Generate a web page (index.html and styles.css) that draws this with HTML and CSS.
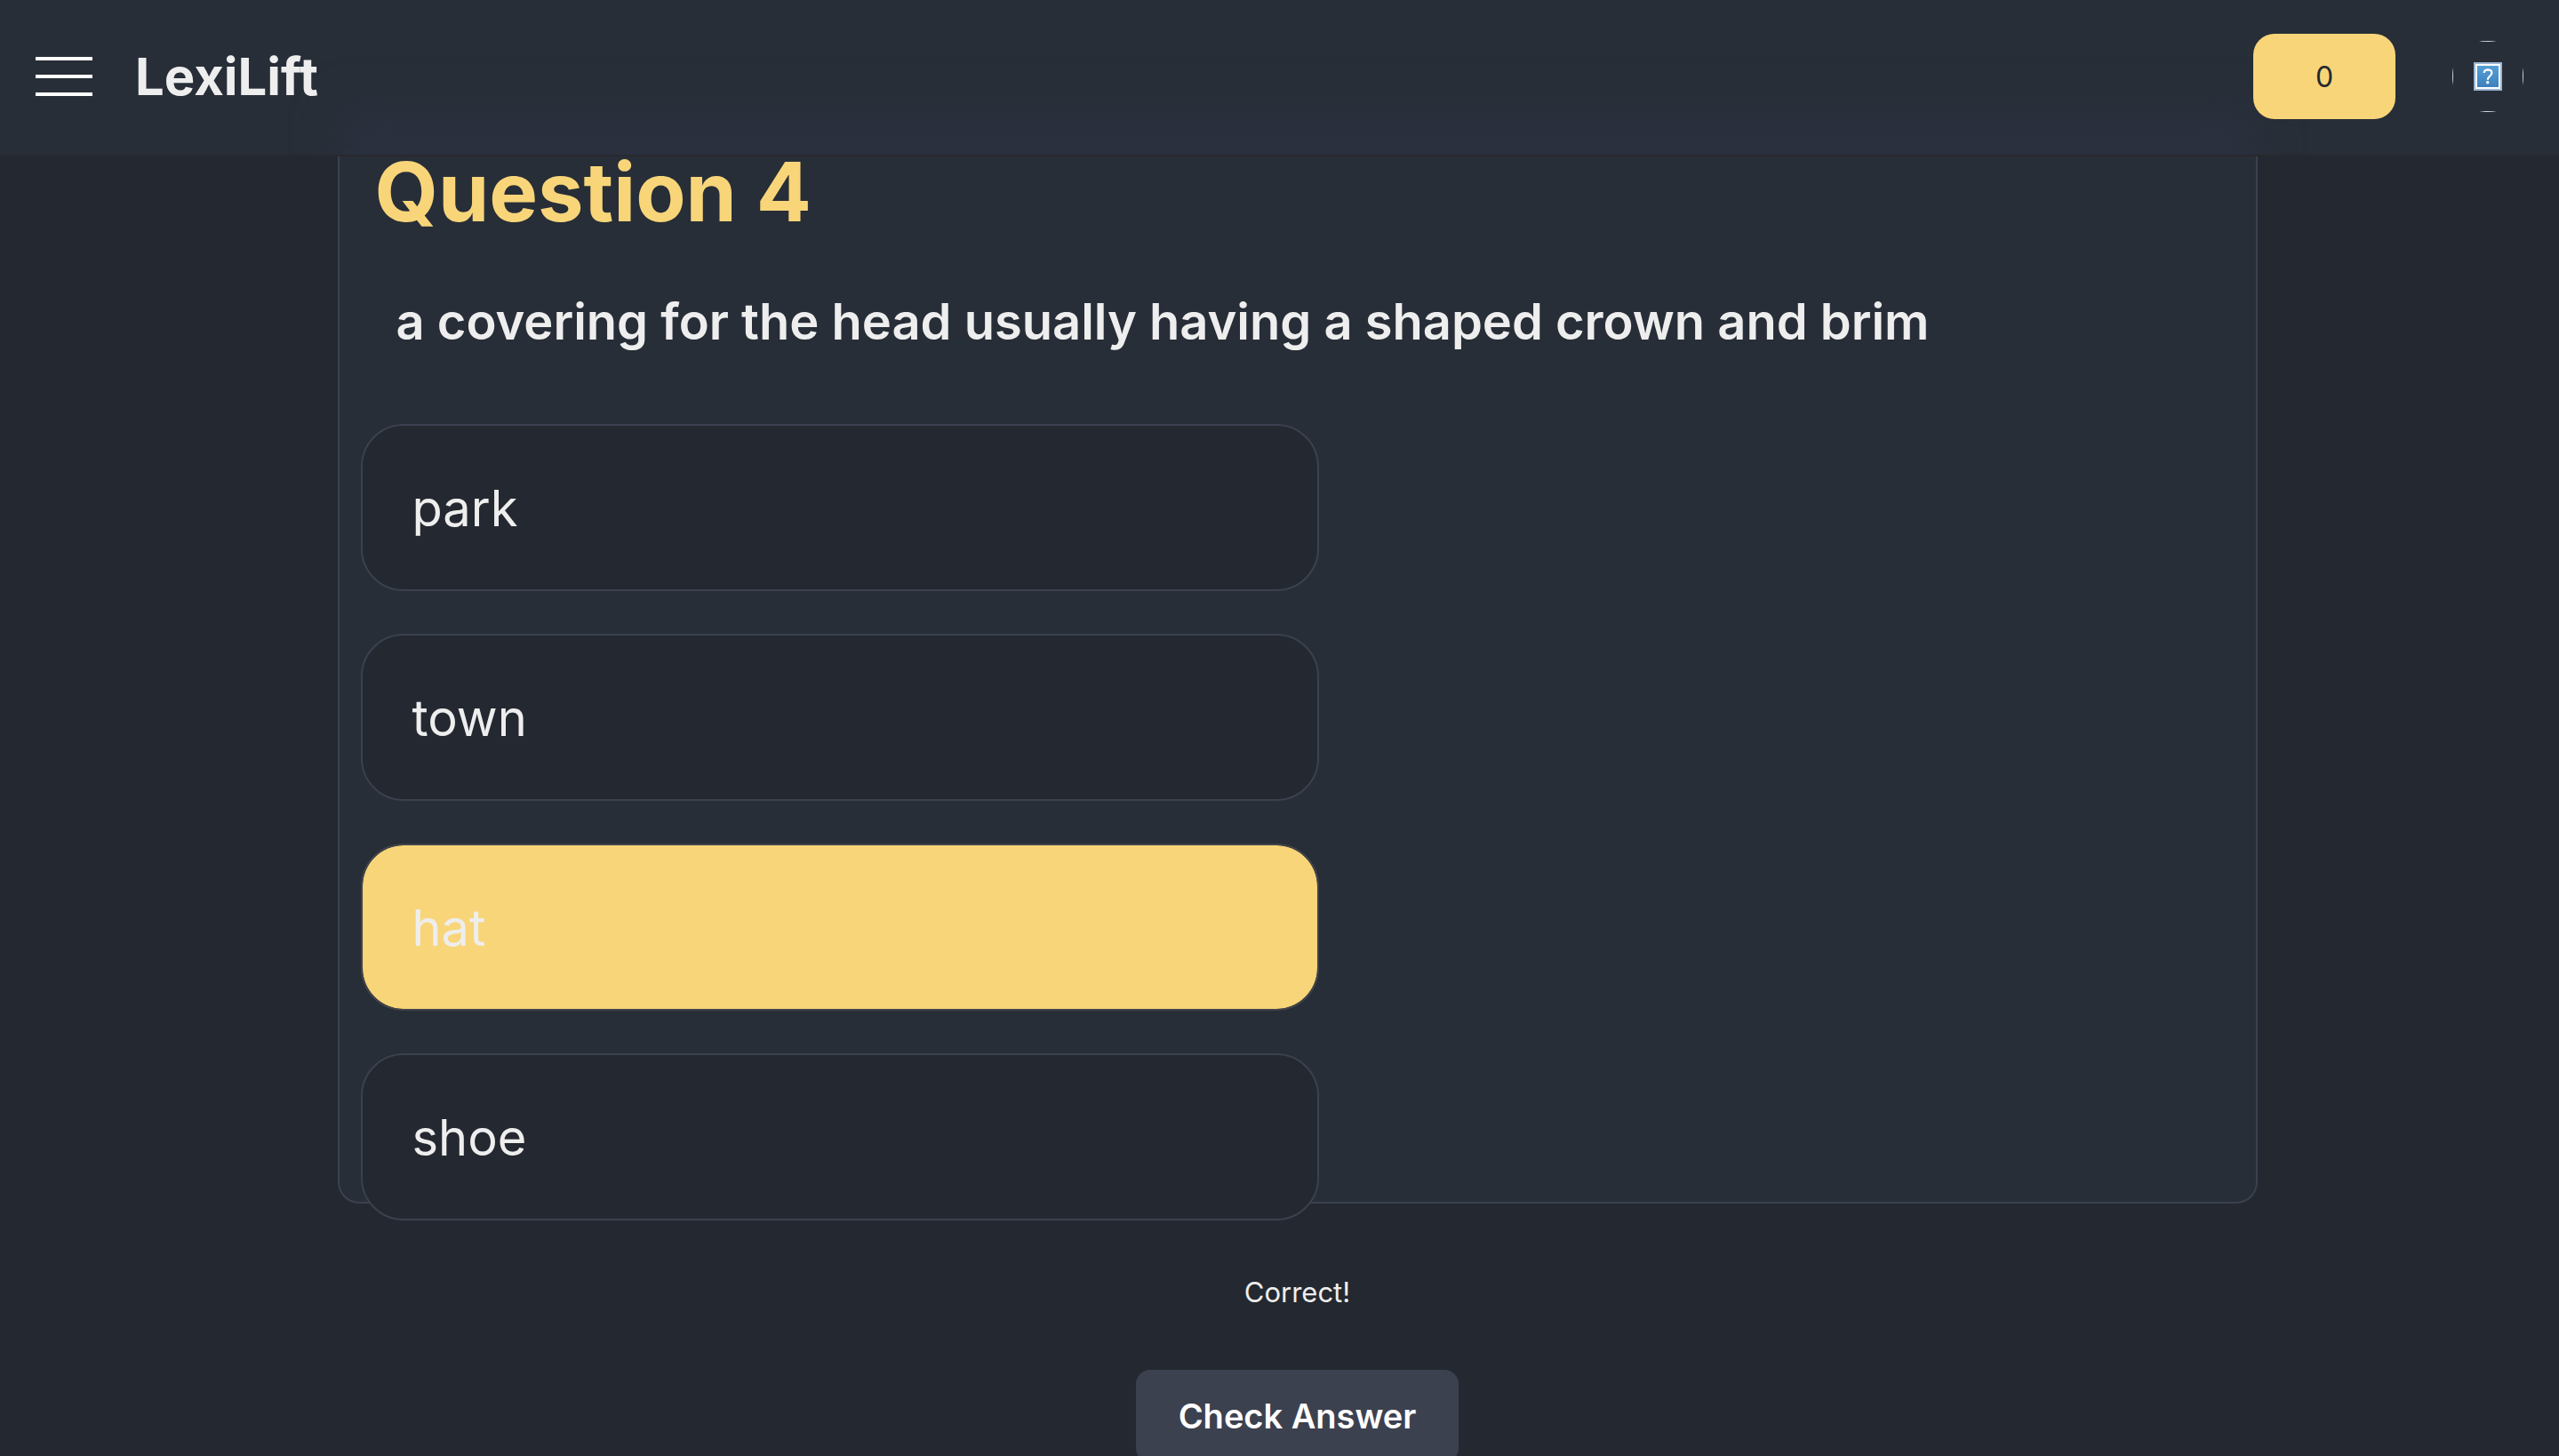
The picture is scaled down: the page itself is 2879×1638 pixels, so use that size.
FILE: index.html
```html
<!DOCTYPE html>
<html lang="en">
<head>
<meta charset="utf-8">
<meta name="viewport" content="width=device-width, initial-scale=1">
<title>LexiLift</title>
<link rel="stylesheet" href="styles.css">
</head>
<body>
<header class="topbar">
  <button class="menu" type="button" aria-label="Menu">
    <span class="menu-line"></span>
    <span class="menu-line"></span>
    <span class="menu-line"></span>
  </button>
  <a class="brand" href="#">LexiLift</a>
  <button class="score" type="button">0</button>
  <a class="avatar" href="#" aria-label="Profile">
    <svg class="avatar-ring" viewBox="0 0 80 80" aria-hidden="true">
      <g fill="#d5d8db">
        <path d="M30 1Q40-1 50 1z"/>
        <path d="M30 79Q40 81 50 79z"/>
        <path d="M1 30Q-1 40 1 50z"/>
        <path d="M79 30Q81 40 79 50z"/>
      </g>
      <defs>
        <linearGradient id="tile" x1="0" y1="0" x2="0" y2="1">
          <stop offset="0" stop-color="#559fd6"/>
          <stop offset="1" stop-color="#3f80bd"/>
        </linearGradient>
      </defs>
      <rect x="24" y="24" width="32" height="32" fill="#9db4d4"/>
      <rect x="26" y="26" width="28" height="28" fill="#fff"/>
      <rect x="28" y="28" width="24" height="24" fill="url(#tile)"/>
      <path d="M35.600 36Q36 32.300 40 32.300Q44.400 32.500 44.400 36Q44.300 38 42 39.800Q39.800 41.400 39.800 43.800" fill="none" stroke="#fff" stroke-width="2.200"/>
      <circle cx="39.700" cy="46.700" r="1.700" fill="#fff"/>
    </svg>
  </a>
</header>
<main class="page">
  <section class="card">
    <h1 class="title">Question 4</h1>
    <h2 class="prompt">a covering for the head usually having a shaped crown and brim</h2>
    <div class="options">
      <button class="option" type="button">park</button>
      <button class="option" type="button">town</button>
      <button class="option selected" type="button">hat</button>
      <button class="option" type="button">shoe</button>
    </div>
  </section>
  <p class="feedback" role="status">Correct!</p>
  <button class="check" type="button">Check Answer</button>
</main>
</body>
</html>
```
FILE: styles.css
```css
* {
  box-sizing: border-box;
}

body {
  margin: 0;
  height: 100vh;
  overflow: hidden;
  background: #242830;
  color: #eeeeee;
  font-family: Inter, "Liberation Sans", sans-serif;
}

button {
  font: inherit;
  color: inherit;
  border: 0;
  cursor: pointer;
}

a {
  color: inherit;
  text-decoration: none;
}

.topbar {
  position: relative;
  z-index: 0;
  display: flex;
  align-items: center;
  height: 176px;
  padding: 0 40px 2px;
  overflow: hidden;
  background: #272e37;
  border-bottom: 2px solid #26292f;
}

/* soft glow of the card beneath the bar */
.topbar::before {
  content: "";
  position: absolute;
  z-index: -1;
  top: 120px;
  left: 380px;
  right: 340px;
  height: 200px;
  background: #2a303e;
  filter: blur(24px);
}

.menu {
  display: flex;
  flex-direction: column;
  gap: 16px;
  width: 64px;
  padding: 0;
  background: none;
}

.menu-line {
  height: 4px;
  background: #ffffff;
}

.brand {
  margin-left: 48px;
  font-size: 58px;
  line-height: 72px;
  font-weight: 700;
}

.score {
  width: 160px;
  height: 96px;
  margin-left: auto;
  border-radius: 24px;
  background: #f8d579;
  color: #242830;
  font-size: 32px;
}

.avatar {
  width: 80px;
  height: 80px;
  margin-left: 64px;
}

.avatar-ring {
  display: block;
  width: 100%;
  height: 100%;
}

.page {
  display: flex;
  flex-direction: column;
  align-items: center;
  padding-left: 40px;
}

.card {
  width: 2160px;
  max-width: 100%;
  padding: 0 24px;
  border: 2px solid #3c414f;
  border-top: 0;
  border-radius: 0 0 24px 24px;
  background: #272e37;
}

.title {
  margin: 0;
  padding: 0 16px;
  color: #f8d579;
  font-size: 92px;
  line-height: 80px;
  font-weight: 700;
}

.prompt {
  margin: 64px 0 73px;
  padding: 0 40px;
  font-size: 56px;
  line-height: 84px;
  font-weight: 600;
}

.options {
  display: flex;
  flex-direction: column;
  gap: 48px;
  width: calc(50% + 24px);
  margin-bottom: -21px;
}

.option {
  height: 188px;
  padding: 2px 56px 0;
  border: 2px solid #3c414f;
  border-radius: 48px;
  background: #242830;
  font-size: 56px;
  text-align: left;
}

.option.selected {
  border-color: #41434a;
  background: #f8d579;
  background-clip: padding-box;
}

.feedback {
  margin: 80px 0 67px;
  font-size: 31px;
  line-height: 40px;
}

.check {
  padding: 24px 48px;
  border-radius: 16px;
  background: #3c414f;
  color: #ffffff;
  font-size: 38px;
  line-height: 56px;
  font-weight: 600;
}
```
